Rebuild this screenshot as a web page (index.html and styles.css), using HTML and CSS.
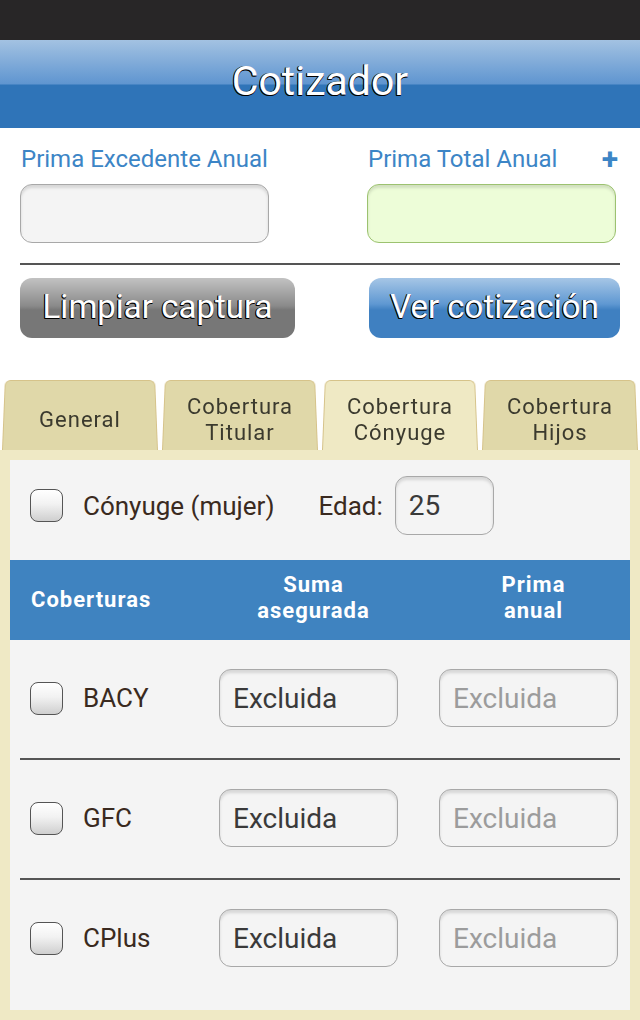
FILE: index.html
```html
<!DOCTYPE html>
<html lang="es">
<head>
<meta charset="utf-8">
<title>Cotizador</title>
<link rel="stylesheet" href="styles.css">
</head>
<body>
<div class="status"></div>
<header class="bar"><h1>Cotizador</h1></header>

<section class="totals">
  <div class="col">
    <div class="label-row"><span class="label">Prima Excedente Anual</span></div>
    <input class="box" type="text">
  </div>
  <div class="col">
    <div class="label-row"><span class="label">Prima Total Anual</span><span class="plus">+</span></div>
    <input class="box box-green" type="text">
  </div>
</section>

<hr class="rule rule-top">

<div class="actions">
  <button class="btn btn-gray">Limpiar captura</button>
  <button class="btn btn-blue">Ver cotización</button>
</div>

<nav class="tabs">
  <div class="tab"><span>General</span></div>
  <div class="tab"><span>Cobertura<br>Titular</span></div>
  <div class="tab active"><span>Cobertura<br>Cónyuge</span></div>
  <div class="tab"><span>Cobertura<br>Hijos</span></div>
</nav>

<div class="panel">
  <div class="inner">
    <div class="spouse">
      <span class="check"></span>
      <span class="txt">Cónyuge (mujer)</span>
      <span class="txt edad">Edad:</span>
      <input class="box box-age" type="text" value="25">
    </div>

    <div class="thead">
      <div class="th th-left">Coberturas</div>
      <div class="th">Suma<br>asegurada</div>
      <div class="th">Prima<br>anual</div>
    </div>

    <div class="row">
      <div class="name"><span class="check"></span><span class="txt">BACY</span></div>
      <input class="box box-row" type="text" value="Excluida">
      <input class="box box-row" type="text" placeholder="Excluida">
    </div>
    <hr class="rule rule-in">
    <div class="row">
      <div class="name"><span class="check"></span><span class="txt">GFC</span></div>
      <input class="box box-row" type="text" value="Excluida">
      <input class="box box-row" type="text" placeholder="Excluida">
    </div>
    <hr class="rule rule-in">
    <div class="row">
      <div class="name"><span class="check"></span><span class="txt">CPlus</span></div>
      <input class="box box-row" type="text" value="Excluida">
      <input class="box box-row" type="text" placeholder="Excluida">
    </div>
  </div>
</div>
</body>
</html>
```

FILE: styles.css
```css
* { box-sizing: border-box; }

html, body {
  margin: 0;
  padding: 0;
  background: #ffffff;
  font-family: Roboto, "Liberation Sans", sans-serif;
  width: 640px;
  overflow: hidden;
}

.status {
  height: 40px;
  background: #282627;
}

.bar {
  height: 88px;
  background: linear-gradient(to bottom, #a3c2e2 0px, #5f95d0 44px, #2f74b8 45px, #2f74b8 88px);
  display: flex;
  align-items: center;
  justify-content: center;
}

.bar h1 {
  margin: 0;
  font-size: 41px;
  font-weight: 400;
  color: #ffffff;
  text-shadow: -1px 1px 0 #000, -1px 0 0 #000, 0 1px 0 #000;
  line-height: 1;
  padding-bottom: 6px;
}

.totals {
  display: grid;
  grid-template-columns: 249px 249px;
  justify-content: space-between;
  padding: 0 24px 0 20px;
  margin-top: 16px;
}

.label-row {
  display: flex;
  justify-content: space-between;
  align-items: center;
  height: 30px;
  padding-left: 1px;
  margin-bottom: 10px;
}

.label {
  font-size: 24px;
  color: #3c85c6;
}

.plus {
  font-size: 30px;
  font-weight: 700;
  color: #3c85c6;
  line-height: 1;
  margin-right: -2px;
}

.box {
  display: block;
  width: 100%;
  height: 59px;
  border: 1px solid #a8a8a8;
  border-radius: 12px;
  background: #f4f4f4;
  box-shadow: inset 0 3px 3px rgba(0, 0, 0, 0.12);
  font-family: Roboto, "Liberation Sans", sans-serif;
  font-size: 28px;
  color: #3a3a3a;
  padding: 0 13px;
  outline: none;
}

.box::placeholder { color: #9c9c9c; opacity: 1; }

.box-green {
  background: #edfdd8;
  border-color: #9cc270;
}

.rule {
  border: 0;
  height: 2px;
  background: #555555;
  margin: 0;
}

.rule-top {
  margin: 20px 20px 0 20px;
}

.actions {
  display: flex;
  justify-content: space-between;
  padding: 0 20px;
  margin-top: 13px;
}

.btn {
  height: 60px;
  border-radius: 12px;
  border: 0;
  font-family: Roboto, "Liberation Sans", sans-serif;
  font-size: 33px;
  color: #ffffff;
  text-shadow: -1px 1px 0 #000, -1px 0 0 #000, 0 1px 0 #000;
  padding: 0 0 4px 0;
}

.btn-gray {
  width: 275px;
  background: linear-gradient(to bottom, #c2c2c2 0px, #8a8a8a 28px, #777777 32px, #777777 60px);
}

.btn-blue {
  width: 251px;
  background: linear-gradient(to bottom, #a6c6e6 0px, #5f98d2 26px, #3f80c1 32px, #3f80c1 60px);
}

.tabs {
  display: flex;
  gap: 4px;
  padding: 0 2px;
  margin-top: 39px;
  height: 73px;
}

.tab {
  position: relative;
  width: 156px;
  height: 73px;
  display: flex;
  align-items: center;
  justify-content: center;
  text-align: center;
  font-size: 22px;
  letter-spacing: 1px;
  line-height: 26px;
  color: #3b3a2e;
  z-index: 0;
  padding-top: 13px;
}

.tab::before {
  content: "";
  position: absolute;
  inset: 0;
  background: #e0d8a9;
  border: 1.5px solid #d6c38a;
  border-bottom: 0;
  border-radius: 6px 6px 0 0;
  transform: perspective(200px) rotateX(6deg);
  transform-origin: bottom;
  z-index: -1;
}

.tab.active::before {
  background: #efe9c4;
}

.panel {
  background: #efe9c5;
  padding: 10px 10px 20px 10px;
}

.inner {
  background: #f4f4f4;
  padding-bottom: 12px;
}

.spouse {
  display: flex;
  align-items: center;
  padding: 16px 0 0 20px;
  height: 75px;
}

.check {
  display: inline-block;
  width: 33px;
  height: 33px;
  flex: none;
  border: 1px solid #555;
  border-radius: 8px;
  background: linear-gradient(to bottom, #ffffff 0%, #f2f2f2 45%, #cfcfcf 100%);
}

.txt {
  font-size: 26px;
  color: #3a2a20;
}

.spouse .check { margin-right: 20px; }
.spouse .edad { margin-left: 44px; margin-right: 12px; }

.box-age {
  width: 99px;
  height: 59px;
}

.thead, .row {
  display: grid;
  grid-template-columns: 1fr 179px 179px;
  column-gap: 41px;
  padding: 0 12px 0 20px;
}

.thead {
  margin-top: 25px;
  height: 80px;
  background: #3f83c0;
  align-items: center;
  padding-left: 21px;
}

.th {
  color: #ffffff;
  font-weight: 700;
  font-size: 22px;
  letter-spacing: 1px;
  line-height: 26px;
  text-align: center;
  padding-left: 10px;
  padding-bottom: 4px;
}

.th-left {
  text-align: left;
  padding-left: 0;
  padding-bottom: 0;
}

.row {
  align-items: center;
  padding-top: 29px;
  padding-bottom: 31px;
}

.name {
  display: flex;
  align-items: center;
  gap: 20px;
}

.box-row {
  height: 58px;
}

.rule-in {
  margin: 0 10px;
}
```
